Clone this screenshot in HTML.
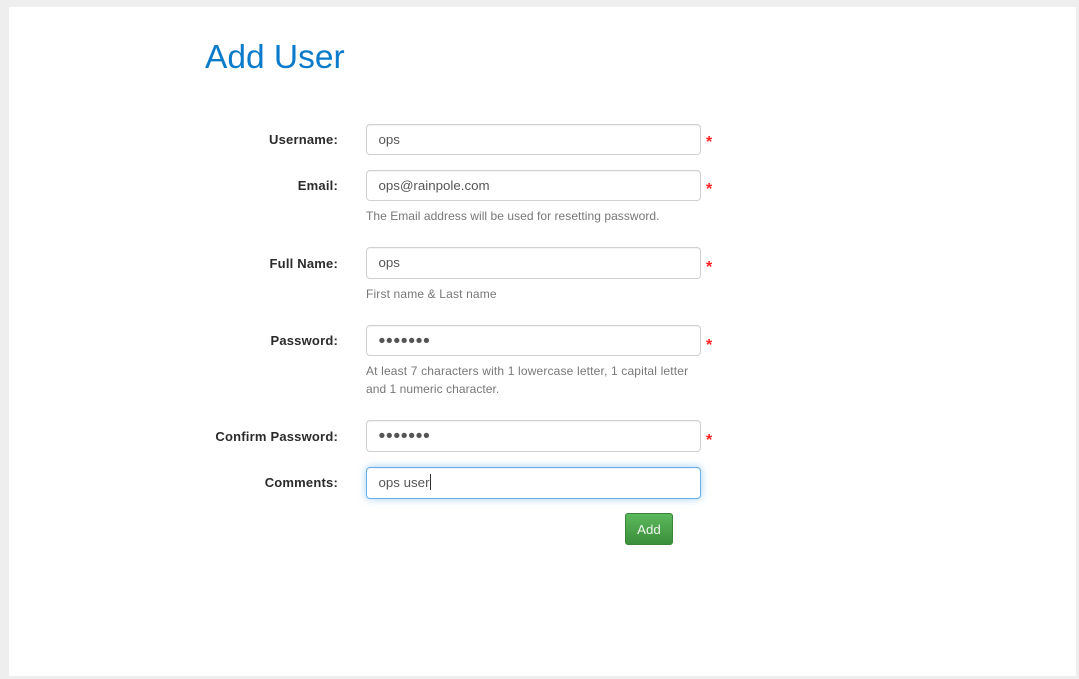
<!DOCTYPE html>
<html>
<head>
<meta charset="utf-8">
<style>
html,body{margin:0;padding:0;width:1079px;height:679px;overflow:hidden;background:#eee;font-family:"Liberation Sans",Arial,sans-serif}
#panel{position:absolute;left:9px;top:7px;width:1067px;height:669px;background:#fff}
#wrap{position:absolute;left:0;top:0;width:1079px;height:679px;filter:blur(.35px)}
h1{position:absolute;left:205px;top:38px;margin:0;font-size:33.5px;line-height:40px;font-weight:400;color:#0a7bcb;white-space:nowrap}
.l{position:absolute;left:160px;width:178px;text-align:right;font-size:13px;letter-spacing:.2px;line-height:20px;font-weight:700;color:#2b2b2b;white-space:nowrap}
.i{position:absolute;left:366px;width:335px;height:31.5px;box-sizing:border-box;border:1px solid #d0d0d0;border-radius:4px;background:#fff;box-shadow:inset 0 1px 1px rgba(0,0,0,.05);padding-left:11.500px;font-size:13.3px;line-height:29px;color:#555;white-space:nowrap}
.f{border-color:#66afe9;box-shadow:inset 0 1px 1px rgba(0,0,0,.05),0 0 8px rgba(102,175,233,.6)}
.s{position:absolute;left:706px;font-size:16px;line-height:20px;color:#f22;font-weight:700}
.h{position:absolute;left:366px;font-size:12px;letter-spacing:.05px;line-height:18px;color:#777;white-space:nowrap}
.d{font-size:19.5px;letter-spacing:.6px;line-height:31px;color:#555}
.c{display:inline-block;width:1px;height:16px;background:#333;vertical-align:-3px}
.b{position:absolute;left:625px;top:513px;width:48px;height:32px;box-sizing:border-box;border:1px solid #398439;border-radius:3px;background:linear-gradient(#5cb85c,#3b8f3b);color:#f0f5f0;font-size:13.3px;line-height:31px;text-align:center}
</style>
</head>
<body>
<div id="panel"></div>
<div id="wrap">
<h1>Add User</h1>

<div class="l" style="top:130px">Username:</div>
<div class="i" style="top:124px;height:31px">ops</div>
<div class="s" style="top:133px">*</div>

<div class="l" style="top:176px">Email:</div>
<div class="i" style="top:170px;height:31px">ops@rainpole.com</div>
<div class="s" style="top:180px">*</div>
<div class="h" style="top:207px">The Email address will be used for resetting password.</div>

<div class="l" style="top:254px">Full Name:</div>
<div class="i" style="top:247px;height:32px">ops</div>
<div class="s" style="top:258px">*</div>
<div class="h" style="top:285px;letter-spacing:.15px">First name &amp; Last name</div>

<div class="l" style="top:331px">Password:</div>
<div class="i d" style="top:325px;height:31px">&#8226;&#8226;&#8226;&#8226;&#8226;&#8226;&#8226;</div>
<div class="s" style="top:336px">*</div>
<div class="h" style="top:362px;letter-spacing:.16px">At least 7 characters with 1 lowercase letter, 1 capital letter</div>
<div class="h" style="top:380px">and 1 numeric character.</div>

<div class="l" style="top:427px">Confirm Password:</div>
<div class="i d" style="top:420px;height:32px">&#8226;&#8226;&#8226;&#8226;&#8226;&#8226;&#8226;</div>
<div class="s" style="top:431px">*</div>

<div class="l" style="top:473px">Comments:</div>
<div class="i f" style="top:467px;height:32px">ops user<span class="c"></span></div>

<div class="b">Add</div>
</div>
</body>
</html>
